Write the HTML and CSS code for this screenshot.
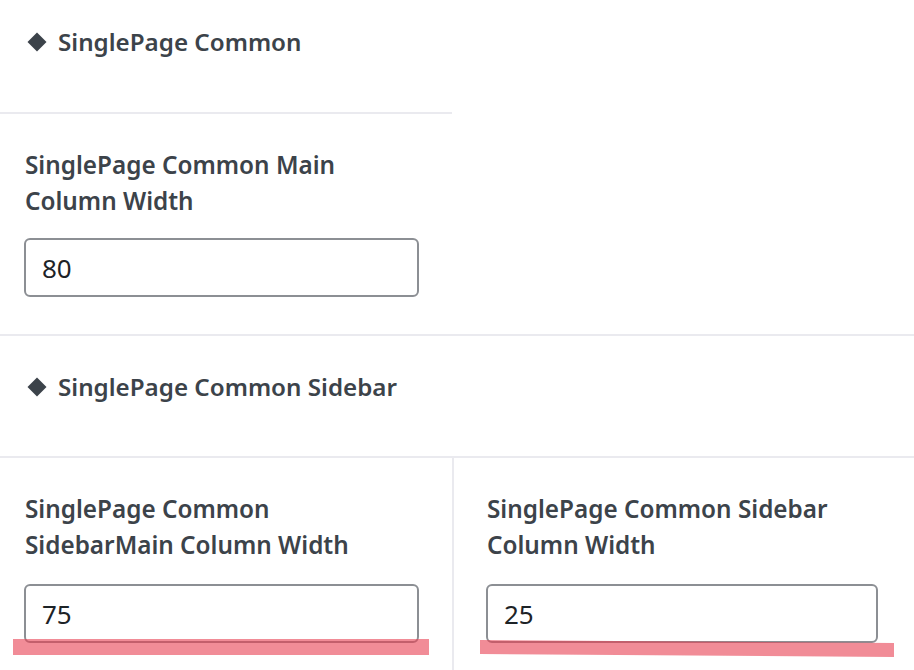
FILE: index.html
```html
<!DOCTYPE html>
<html>
<head>
  <title>SinglePage Settings</title>
  <link rel="stylesheet" href="styles.css">
</head>
<body>
  <div class="panel">
    <div class="section-head narrow">
      <svg class="diamond" width="20" height="20" viewBox="0 0 20 20"><polygon points="10,0.5 19.5,10 10,19.5 0.5,10"/></svg>
      <span>SinglePage Common</span>
    </div>

    <div class="row">
      <div class="field">
        <label class="field-label" for="main-width">SinglePage Common Main<br>Column Width</label>
        <input type="text" id="main-width" class="field-input" value="80">
      </div>
    </div>

    <div class="section-head second">
      <svg class="diamond" width="20" height="20" viewBox="0 0 20 20"><polygon points="10,0.5 19.5,10 10,19.5 0.5,10"/></svg>
      <span>SinglePage Common Sidebar</span>
    </div>

    <div class="row split">
      <div class="field">
        <label class="field-label" for="sidebar-main-width">SinglePage Common<br>SidebarMain Column Width</label>
        <input type="text" id="sidebar-main-width" class="field-input" value="75">
      </div>
      <div class="field right">
        <label class="field-label" for="sidebar-width">SinglePage Common Sidebar<br>Column Width</label>
        <input type="text" id="sidebar-width" class="field-input" value="25">
      </div>
    </div>

    <!-- highlight marks drawn over the inputs -->
    <svg class="marks" width="914" height="670" viewBox="0 0 914 670">
      <polygon points="13,639 429,639 429,655 13,655"/>
      <polygon points="480,640 894,643 894,657 480,654"/>
    </svg>
  </div>
</body>
</html>
```

FILE: styles.css
```css
html, body {
  margin: 0;
  background-color: #ffffff;
}

body {
  font-family: "Noto Sans", "Open Sans", sans-serif;
  color: #3c434a;
  overflow: hidden;
}

.panel {
  position: relative;
  width: 914px;
  height: 670px;
}

.section-head {
  display: flex;
  align-items: center;
  gap: 11px;
  padding: 24px 0 52px 27px;
  font-size: 24.2px;
  font-weight: 600;
  line-height: 36px;
  border-bottom: 2px solid #eaeaef;
}

.section-head.narrow {
  width: 425px;
}

.section-head.second {
  padding-top: 33px;
  padding-bottom: 51px;
}

.diamond {
  fill: #3c434a;
  flex-shrink: 0;
}

.row {
  display: flex;
  border-bottom: 2px solid #eaeaef;
}

.row.split {
  border-bottom: none;
}

.field {
  width: 395px;
  padding: 33px 33px 37px 24px;
  display: flex;
  flex-direction: column;
}

.row.split .field {
  border-right: 2px solid #eaeaef;
}

.row.split .field.right {
  flex: 1;
  border-right: none;
  padding-left: 32px;
  padding-right: 36px;
}

.field-label {
  padding-left: 1px;
  font-size: 24.3px;
  font-weight: 600;
  line-height: 36px;
  margin-bottom: 19px;
}

.row.split .field-label {
  margin-bottom: 21px;
}

.field-input {
  box-sizing: border-box;
  width: 100%;
  height: 59px;
  padding: 0 16px;
  font-family: inherit;
  font-size: 26px;
  color: #1d2327;
  background-color: #fff;
  border: 2px solid #8c8f94;
  border-radius: 6px;
  outline: none;
}

.marks {
  position: absolute;
  left: 0;
  top: 0;
  pointer-events: none;
}

.marks polygon {
  fill: rgba(232, 64, 82, 0.6);
}
```
